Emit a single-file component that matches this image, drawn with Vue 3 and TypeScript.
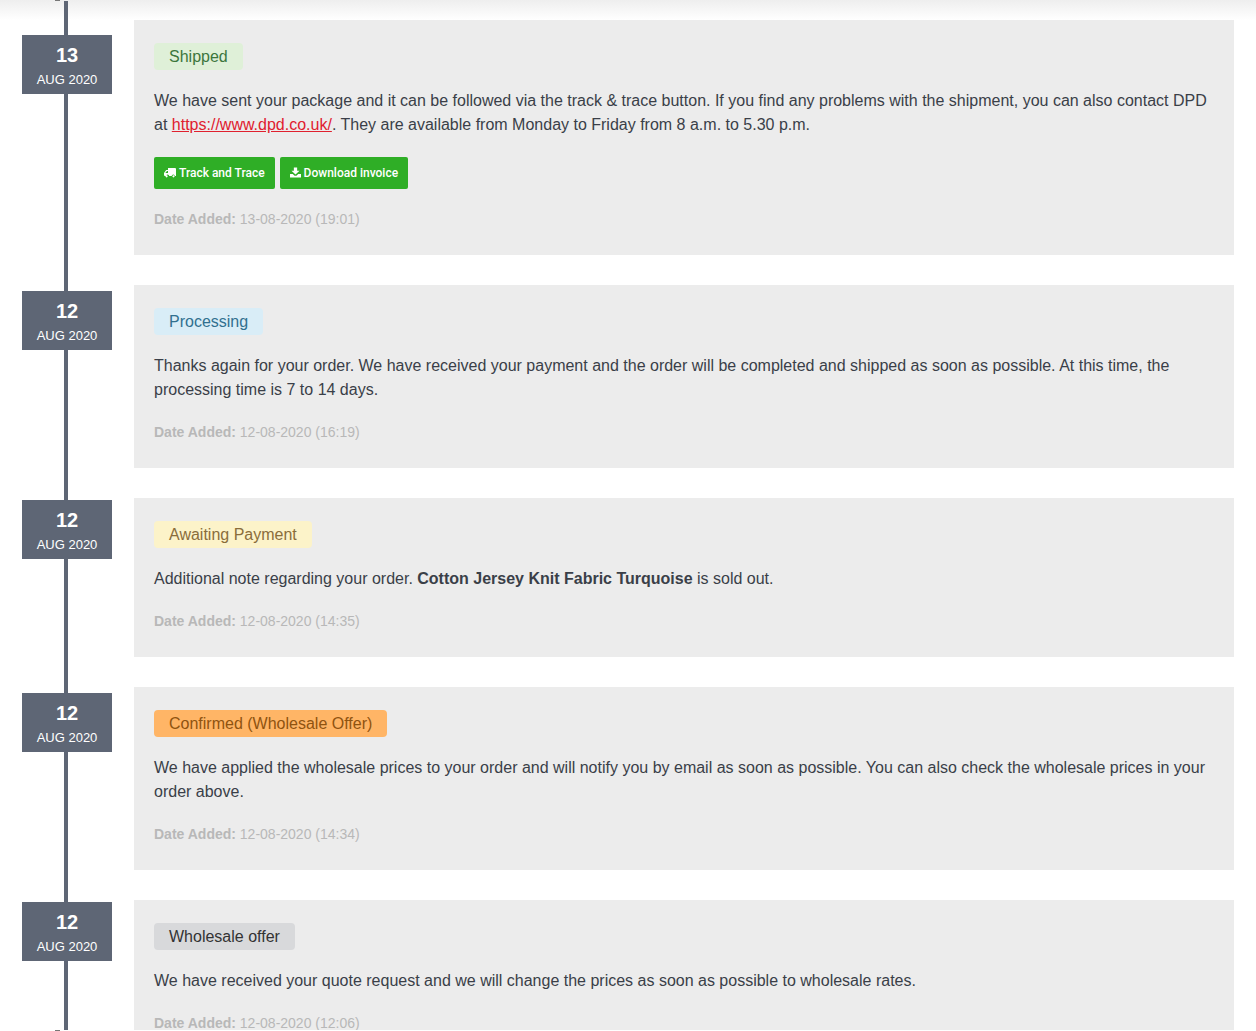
<script setup lang="ts">
interface Entry {
  day: string
  status: string
  kind: string
  date: string
  offset: number
}
const entries: Entry[] = [
  { day: '13', status: 'Shipped', kind: 'shipped', date: '13-08-2020 (19:01)', offset: 15 },
  { day: '12', status: 'Processing', kind: 'processing', date: '12-08-2020 (16:19)', offset: 6 },
  { day: '12', status: 'Awaiting Payment', kind: 'awaiting', date: '12-08-2020 (14:35)', offset: 2 },
  { day: '12', status: 'Confirmed (Wholesale Offer)', kind: 'confirmed', date: '12-08-2020 (14:34)', offset: 6 },
  { day: '12', status: 'Wholesale offer', kind: 'wholesale', date: '12-08-2020 (12:06)', offset: 2 }
]
</script>

<template>
  <div class="page">
    <div class="fade"></div>
    <div class="timeline">
      <div v-for="(e, i) in entries" :key="i" class="row">
        <div class="date-box" :style="{ marginTop: e.offset + 'px' }">
          <div class="day">{{ e.day }}</div>
          <div class="month">AUG 2020</div>
        </div>
        <div class="card">
          <div><span class="badge" :class="e.kind">{{ e.status }}</span></div>
          <p v-if="i === 0" class="text">We have sent your package and it can be followed via the track &amp; trace button. If you find any problems with the shipment, you can also contact DPD at <a href="#" class="link">https://www.dpd.co.uk/</a>. They are available from Monday to Friday from 8 a.m. to 5.30 p.m.</p>
          <p v-else-if="i === 1" class="text">Thanks again for your order. We have received your payment and the order will be completed and shipped as soon as possible. At this time, the processing time is 7 to 14 days.</p>
          <p v-else-if="i === 2" class="text">Additional note regarding your order. <strong>Cotton Jersey Knit Fabric Turquoise</strong> is sold out.</p>
          <p v-else-if="i === 3" class="text">We have applied the wholesale prices to your order and will notify you by email as soon as possible. You can also check the wholesale prices in your order above.</p>
          <p v-else class="text">We have received your quote request and we will change the prices as soon as possible to wholesale rates.</p>
          <div v-if="i === 0" class="actions">
            <a href="#" class="btn">
              <svg class="icon" viewBox="0 0 12 10"><path fill="currentColor" d="M4 0h7a1 1 0 0 1 1 1v7h-1.100a1.600 1.600 0 0 0-3.200 0H5.200a1.600 1.600 0 0 0-3.200 0H1a1 1 0 0 1-1-1V5l2.200-3H4zM3 3 1.300 5H4V3zM3.700 8.300a1.100 1.100 0 1 1-2.200 0 1.100 1.100 0 0 1 2.200 0zm6.900 0a1.100 1.100 0 1 1-2.200 0 1.100 1.100 0 0 1 2.200 0z"/></svg>
              Track and Trace
            </a>
            <a href="#" class="btn">
              <svg class="icon dl" viewBox="0 0 12 11"><path fill="currentColor" d="M4.200 0h3.600v3.500H10.400L6 7.800 1.600 3.500h2.600zM0 7h3l2 2h2l2-2h3v4H0z"/></svg>
              Download invoice
            </a>
          </div>
          <div class="added"><strong>Date Added:</strong> {{ e.date }}</div>
        </div>
      </div>
    </div>
    <div class="bottom-edge"></div>
    <span class="stub stub-top"></span>
    <span class="stub stub-bottom"></span>
  </div>
</template>

<style>
html, body { margin: 0; background: #fff; overflow: hidden; }
</style>

<style scoped>
.page {
  position: relative;
  height: 1031px;
  overflow: hidden;
  font-family: "Liberation Sans", Arial, sans-serif;
  background: #fff;
}
.fade {
  position: absolute;
  inset: 0 0 auto 0;
  height: 20px;
  background: linear-gradient(#eeeeee, #ffffff);
}
.timeline {
  position: relative;
  padding: 20px 22px 0;
  display: flex;
  flex-direction: column;
  gap: 30px;
}
.timeline::before {
  content: "";
  position: absolute;
  left: 64px;
  top: 1px;
  bottom: 0;
  width: 4px;
  background: #5e6675;
}
.row {
  position: relative;
  display: flex;
  align-items: flex-start;
  gap: 22px;
}
.date-box {
  flex: 0 0 90px;
  height: 59px;
  background: #5e6675;
  color: #fff;
  text-align: center;
  position: relative;
}
.day {
  font-size: 20px;
  font-weight: 700;
  line-height: 24px;
  padding-top: 8px;
}
.month {
  font-size: 13px;
  line-height: 20px;
  margin-top: 3px;
}
.card {
  flex: 1;
  background: #ececec;
  padding: 23px 20px 26px;
  color: #3a3f48;
  font-size: 16px;
  line-height: 24px;
}
.badge {
  display: inline-block;
  height: 27px;
  line-height: 27px;
  padding: 0 15px;
  border-radius: 4px;
  font-size: 16px;
}
.shipped { background: #dff0d8; color: #3c763d; }
.processing { background: #d9edf7; color: #31708f; }
.awaiting { background: #fcf3c9; color: #8a6d3b; }
.confirmed { background: #ffb566; color: #8f5310; }
.wholesale { background: #d8d9db; color: #333; }
.text {
  margin: 19px 0 0;
}
.link { color: #e0202e; text-decoration: underline; }
.actions {
  display: flex;
  gap: 5px;
  margin-top: 20px;
}
.btn {
  display: flex;
  align-items: center;
  gap: 3px;
  height: 32px;
  padding: 0 10px;
  background: #2fae26;
  color: #fff;
  border-radius: 2px;
  font-family: Roboto, "Liberation Sans", sans-serif;
  font-size: 12px;
  font-weight: 500;
  text-decoration: none;
}
.icon { width: 12px; height: 10px; display: block; }
.icon.dl { width: 11px; height: 11px; margin-top: -2px; }
.added {
  margin-top: 20px;
  font-size: 14px;
  line-height: 20px;
  color: #b8b8b8;
}
.bottom-edge {
  position: absolute;
  left: 0;
  right: 0;
  bottom: 0;
  height: 1px;
  background: #fff;
}
.stub {
  position: absolute;
  left: 55px;
  width: 5px;
  height: 1px;
  background: #777;
}
.stub-top { top: 0; }
.stub-bottom { bottom: 0; }
</style>
